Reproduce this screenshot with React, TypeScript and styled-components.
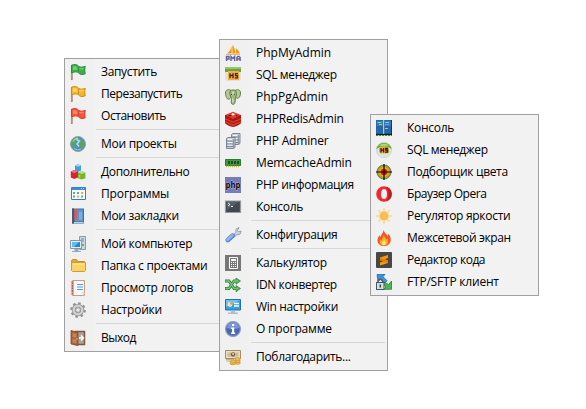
import React from "react";
import styled, { createGlobalStyle } from "styled-components";

const GlobalStyle = createGlobalStyle`
  html, body { margin: 0; background: #fff; }
  body { overflow: hidden; }
`;

const Desktop = styled.main`
  position: relative;
  width: 586px;
  height: 409px;
  background: #fff;
`;

const Menu = styled.ul<{ $x: number; $y: number }>`
  position: absolute;
  left: ${(p) => p.$x}px;
  top: ${(p) => p.$y}px;
  box-sizing: border-box;
  width: 169px;
  margin: 0;
  padding: 2px;
  list-style: none;
  border: 1px solid #a0a0a0;
  background: linear-gradient(to right, #f0f0f0 29px, #f2f2f2 29px);
  font-family: "Open Sans", "Noto Sans", sans-serif;
  font-size: 12px;
  color: #000;
`;

const Item = styled.li`
  display: flex;
  align-items: center;
  height: 22px;
  padding-left: 3px;
`;

const Separator = styled.li`
  height: 1px;
  margin: 2px 0 3px 29px;
  background: #d7d7d7;
`;

const Icon = styled.svg`
  flex: none;
  width: 16px;
  height: 16px;
  margin-right: 15px;
  overflow: visible;
`;

const Label = styled.span<{ $tracking: number }>`
  line-height: 22px;
  white-space: nowrap;
  letter-spacing: ${(p) => p.$tracking}px;
`;

const Flag = ({ fill, dark, light }: { fill: string; dark: string; light: string }) => (
  <>
    <path d="M1.800 1.500V15.800" stroke="#9a6a48" strokeWidth="1.700" />
    <path d="M1.800 9V15" stroke="#e8c8a8" strokeWidth=".6" />
    <path d="M1.500 1.200C4 .2 7.300.2 8.500 2.300c2 1.300 4 1 6.700 0l-.5 3.800.5 3.700c-3 1.200-5.300.9-6.600-1C7 7.500 5 7.600 1.500 8.800Z" fill={fill} stroke={dark} />
    <path d="M3 2.500c2-.6 3.600-.2 4.300 1.400V6.500C6.500 5.500 5 5.700 3 6.200Z" fill={light} opacity=".65" />
    <path d="M9.500 4.500c1.500.6 3 .4 4-.1" stroke={light} fill="none" />
    <path d="M8.500 3v6" stroke={dark} strokeWidth=".8" />
  </>
);

const icons: Record<string, React.ReactNode> = {
  green: <Flag fill="#3fae4c" dark="#278c38" light="#8be08d" />,
  yellow: <Flag fill="#f6b526" dark="#d18a12" light="#ffe58c" />,
  red: <Flag fill="#f5543a" dark="#d93a2a" light="#ffa38d" />,
  globe: (
    <>
      <circle cx="8" cy="8" r="7.500" fill="#4f8fb8" stroke="#8fa9a8" />
      <path d="M1.500 6C2.500 2.500 6 .8 9 1.300L8 3.500 6 5l1 2-3 1.500L5 11l-1.500 1.500C1.500 11 1 8.500 1.500 6Z" fill="#5aa562" />
      <path d="M11 2.500l3 2.500.8 4-2.300 4-2 .5-.5-3L8.500 9l1.500-3Z" fill="#5ba268" />
      <path d="M6.500 3.500l3 1.500-2.500 3 2 2.500" stroke="#a9e2f6" strokeWidth="1.600" fill="none" />
      <path d="M3 5.500Q4.500 2.500 8 2" stroke="#c3e6bd" fill="none" />
      <path d="M4 12.500q3.500 2.500 7 .5" stroke="#8ccdea" fill="none" />
    </>
  ),
  cubes: (
    <>
      <path d="M5 1.500L8 .2l3 1.200v5.200L8 8 5 6.700Z" fill="#3fa0dc" />
      <path d="M5 1.500L8 .2l3 1.200L8 2.700Z" fill="#9bd8f6" />
      <path d="M.8 7.500L4.200 6 8 7.500v6L4.200 15 .8 13.500Z" fill="#d52632" />
      <path d="M.8 7.500L4.200 6 8 7.500 4.200 9Z" fill="#f1747a" />
      <path d="M8 8.500l3.700-1.200 3.700 1.200v5.700L11.700 15.600 8 14.200Z" fill="#78b52f" />
      <path d="M8 8.500l3.700-1.200 3.700 1.200-3.700 1.400Z" fill="#bce27c" />
      <path d="M9.500 11v2.500" stroke="#a9d85f" strokeWidth="1.500" />
    </>
  ),
  programs: (
    <>
      <path d="M1.500 1.500h14v12h-14Z" fill="#f6fafd" stroke="#3480c4" />
      <path d="M2 2h13v2H2Z" fill="#3c8edb" />
      <path d="M11 2.500h1M13 2.500h1" stroke="#b7dcf8" />
      <path d="M3 6h2v2H3ZM11 9.500h2v2h-2Z" fill="#68b266" />
      <path d="M7 6h2v2H7ZM3 9.500h2v2H3Z" fill="#5b9cd1" />
      <path d="M11 6h2v2h-2ZM7 9.500h2v2H7Z" fill="#eda74c" />
    </>
  ),
  book: (
    <>
      <path d="M2 .5h12v15H2Z" fill="#3c72a8" />
      <path d="M2 .5h2v15H2Z" fill="#505965" />
      <path d="M5 1.500h8v12H5Z" fill="#5c97cc" />
      <path d="M9 4h3v8H9Z" fill="#79aedd" />
      <path d="M4.500 1h3v11.500L6 11l-1.500 1.500Z" fill="#e25858" />
      <path d="M4 14.500h9.500" stroke="#bacfe0" />
    </>
  ),
  computer: (
    <>
      <path d="M9.500.5h6v13h-6Z" fill="#c9d6df" stroke="#8b9eac" />
      <path d="M11 3h3M11 5h3" stroke="#73899a" />
      <path d="M12 9h2" stroke="#55c33f" strokeWidth="2" />
      <path d="M.5 4.500h11v8H.5Z" fill="#e5edf2" stroke="#8099aa" />
      <path d="M2 6h8v5H2Z" fill="#2687ce" />
      <path d="M2 6h7L4 11H2Z" fill="#63bcf0" />
      <path d="M4.500 13h4v2H11v1H2v-1h2.500Z" fill="#94a9b7" />
    </>
  ),
  folder: (
    <>
      <path d="M1.500 2.500L2.500 1.500h4l1.500 2h6.500v3h-13Z" fill="#dfa634" stroke="#c79124" />
      <path d="M1.500 4.500h14v8l-1 1h-12l-1-1Z" fill="#fbd369" stroke="#d59b29" />
      <path d="M3 6h11" stroke="#ffeaa8" />
    </>
  ),
  notebook: (
    <>
      <path d="M2.500.5h12v15h-12Z" fill="#f7f8f9" stroke="#c1a088" />
      <path d="M2.500 1v14" stroke="#b94c33" strokeWidth="2" />
      <path d="M.5 2h3M.5 4.500h3M.5 7h3M.5 9.500h3M.5 12h3M.5 14h3" stroke="#e4c9bd" strokeWidth=".8" />
      <path d="M7 4.500h6M7 7h6M7 9.500h6" stroke="#5795df" strokeWidth="1.200" />
      <path d="M12 11l3 2-2 2.500" fill="#d9d9d9" />
    </>
  ),
  gear: (
    <>
      <circle cx="8" cy="8" r="6.700" fill="none" stroke="#8e8e8e" strokeWidth="2.200" strokeDasharray="2.500 2.760" />
      <circle cx="8" cy="8" r="4.300" fill="none" stroke="#959595" strokeWidth="3.800" />
      <circle cx="8" cy="8" r="4.300" fill="none" stroke="#d2d2d2" strokeWidth="2.300" />
      <circle cx="8" cy="8" r="2.100" fill="#f2f2f2" stroke="#8d8d8d" strokeWidth=".7" />
    </>
  ),
  exit: (
    <>
      <path d="M5.500 1.500h9v13h-9Z" fill="#aaa39c" stroke="#80583c" strokeWidth="1.500" />
      <path d="M1 .5l7 2v13l-7-1.500Z" fill="#a86539" stroke="#7e4727" strokeWidth=".8" />
      <path d="M2.500 3l4 1v3.500l-4-.5ZM2.500 9l4 .500v4l-4-1Z" fill="#c7834e" />
      <path d="M9 8h4.500M11 5.500L13.500 8 11 10.500" stroke="#f7fafb" strokeWidth="1.500" fill="none" />
      <path d="M7 8v1.500" stroke="#f5ce70" />
    </>
  ),
  pma: (
    <>
      <path d="M2 8.500C4.800 6.500 5.800 4 6.600 1.500v7ZM7.400 0c1.900 2 2.700 4.500 2.900 8.500H7.400ZM11 3.200c1.800 1.500 2.700 3 3.800 5.300H11Z" fill="#f8960a" />
      <path d="M1 9.400h14" stroke="#c7a774" strokeWidth=".8" />
      <path d="M1.500 16v-4.500H4v2.500H1.500M6 16v-4.500l1.800 2 1.800-2V16M11.900 16v-3.500l1-1h1.200l1 1V16M12 14h3" fill="none" stroke="#60609a" strokeWidth="1.400" />
    </>
  ),
  heidi: (
    <>
      <path d="M0 0h16v5H0Z" fill="#68a442" /><path d="M0 0h16v2H0Z" fill="#92c76f" />
      <path d="M0 5h16v7l-1 2H1l-1-2Z" fill="#dae5e3" />
      <path d="M3 4h11v9H3Z" fill="#fba83f" />
      <path d="M5 6.200v5M8 6.200v5M5 8.500h3M13 6.700h-2.500v1.900h2v2.200H9.800" fill="none" stroke="#392a16" strokeWidth="1.300" />
    </>
  ),
  elephant: (
    <>
      <path d="M5.500 1C2.500 0 .3 1.300.5 4c0 3 1.500 6.500 3 6.300 1.400-.2 2-1.800 2-1.800ZM10.500 1c3-1 5.200.3 5 3 0 3-1.500 5.500-3 5.300-1.400-.2-2-1.300-2-1.300Z" fill="#b4ca95" stroke="#687f4f" />
      <path d="M5.200 2C6 .6 10 .6 10.800 2c1 2.200.7 4.500-.3 6.500L10 13.500c-.2 2.300-3.200 2.500-3.700.4V9C5 7 4.400 4.200 5.200 2Z" fill="#9fb97f" stroke="#687f4f" />
      <path d="M8 2.500v3M7.800 9.500v4" stroke="#d4e4bc" strokeWidth="1.300" />
      <path d="M6 5.500h1M9.200 5.500h1" stroke="#40502f" />
    </>
  ),
  redis: (
    <>
      <path d="M0 4v8c0 1 6 4 8 4s8-3 8-4V4Z" fill="#a31912" />
      <path d="M0 10l8 3.200 8-3.200v1.500L8 15 0 11.500ZM0 7l8 3.500L16 7v1.500L8 12 0 8.500Z" fill="#df3a2f" />
      <path d="M0 4L8 .8 16 4 8 8Z" fill="#e33b31" />
      <path d="M7 2l1 .6 1.500-.3-.4.900 1.200.7-1.700.1-.6.9-.8-1-1.600-.1 1.300-.6Z" fill="#fff" />
      <path d="M3 4.500l2-.7 2 .7-2 1ZM11 3.700l2 .8-2 1Z" fill="#77150f" />
    </>
  ),
  servers: (
    <>
      {[[6, 0], [1, 4]].map(([x, y]) => (
        <g key={x} transform={`translate(${x} ${y})`}>
          <path d="M.5 1.500L2 .5h7v10L7.500 11.500h-7Z" fill="#cbd0d9" stroke="#7f8796" />
          <path d="M.5 4h8M.5 7h8M.5 9.500h8" stroke="#7a8190" />
          <path d="M2 2.500h4M2 5.500h4M2 8.300h4" stroke="#f3f5f8" />
          <path d="M7.500 2v9" stroke="#929baa" />
        </g>
      ))}
    </>
  ),
  memory: (
    <>
      <path d="M.5 4.500h15v6H.5Z" fill="#3b9d42" stroke="#287d30" />
      <path d="M3 6h2v3H3ZM6 6h2v3H6ZM9 6h2v3H9ZM12 6h2v3h-2Z" fill="#254b2b" />
      <path d="M1 11.500h14" stroke="#d0b44e" strokeWidth="1.500" strokeDasharray="1 1" />
    </>
  ),
  php: (
    <>
      <path d="M0 0h16v16H0Z" fill="#777bb8" />
      <text x="8" y="11" textAnchor="middle" fontFamily="Open Sans" fontSize="9.500" fontWeight="700" textLength="15" lengthAdjust="spacingAndGlyphs" fill="#101019" stroke="#b9bbe0" strokeWidth=".8" paintOrder="stroke">php</text>
    </>
  ),
  terminal: (
    <>
      <path d="M.5 2h15v11.500H.5Z" fill="#42484e" stroke="#959b9f" strokeWidth="1.200" />
      <path d="M2 3h12l-12 8Z" fill="#555e65" />
      <path d="M3 4l2 1.500L3 7M6 7.500h2" fill="none" stroke="#fff" strokeWidth=".9" />
    </>
  ),
  wrench: (
    <>
      <path d="M8 8l3-2.500C10.300 3 11.500.8 14 .5l-1.500 3 1 1.200L16 4c.3 2.500-1.500 4.200-4 3.700L9.500 10Z" fill="#ced3d8" stroke="#858e98" strokeWidth=".8" />
      <path d="M7.500 8.700L2.800 13" stroke="#4b7fc9" strokeWidth="4.800" strokeLinecap="round" />
      <path d="M7.200 8.500L2.600 12.700" stroke="#8db6ed" strokeWidth="3" strokeLinecap="round" />
    </>
  ),
  calculator: (
    <>
      <path d="M0 0h16v16H0Z" fill="#777" />
      <path d="M4.500 2.500h8v11h-8Z" fill="none" stroke="#fff" />
      <path d="M6 4h5v2H6Z" fill="#fff" />
      <path d="M6 7.500h5M6 9.500h5M6 11.500h5" stroke="#fff" strokeDasharray="1 1" />
    </>
  ),
  shuffle: (
    <>
      <path d="M0 4h4l5 7.500h4M0 11.500h4L9 4h4" fill="none" stroke="#32813a" strokeWidth="3" />
      <path d="M11 1l4.500 3L11 7.200ZM11 8.500l4.500 3-4.500 3.300Z" fill="#4eb15a" stroke="#32813a" strokeWidth=".7" />
      <path d="M.5 4H4l5 7.500h4M.5 11.500H4L9 4h4" fill="none" stroke="#75c57a" strokeWidth="1.300" />
    </>
  ),
  winsettings: (
    <>
      <path d="M.5.5h15v10.500H.5Z" fill="#38a0e0" stroke="#226fb0" />
      <path d="M1 1h14L1 8Z" fill="#6dc4f3" />
      <circle cx="5" cy="5.500" r="2.400" fill="#f7e3b1" /><path d="M5 5.500V3.100A2.400 2.400 0 0 1 7.400 5.500Z" fill="#ee943a" />
      <path d="M9 4.500h5M9 7h5" stroke="#fff" strokeWidth="1.400" />
      <path d="M6 11.500h4v2h3v1.500H3v-1.500h3Z" fill="#aebfca" />
    </>
  ),
  info: (
    <>
      <circle cx="8" cy="8" r="7.400" fill="#4868b7" stroke="#8c9bc0" strokeWidth="1.200" />
      <path d="M2 7a6 6 0 0 1 12 0Q8 9 2 7Z" fill="#7895d4" />
      <path d="M7 3h2.200v2H7ZM6.200 6.500h3v5h1v1.500H6v-1.500h1V8h-.8Z" fill="#fff" />
    </>
  ),
  money: (
    <>
      <path d="M.5 1.500h15v8H.5Z" fill="#e8dcc2" stroke="#a58b66" />
      <path d="M2.500 3.500h11v4h-11Z" fill="#d0bc96" />
      <circle cx="8" cy="5.500" r="2.200" fill="#806646" /><circle cx="8" cy="5" r=".9" fill="#efe4cf" />
      <path d="M1 10.500h8M1 12h6" stroke="#c6ad86" />
      {[14, 12, 10].map((y) => <ellipse key={y} cx="12.500" cy={y} rx="2.800" ry="1.300" fill="#f4c64f" stroke="#c38722" strokeWidth=".7" />)}
      {[14.500, 12.800].map((y) => <ellipse key={y} cx="7.800" cy={y} rx="2.800" ry="1.200" fill="#f4c64f" stroke="#c38722" strokeWidth=".7" />)}
    </>
  ),
  conemu: (
    <>
      <path d="M0 0h7.500V14H0ZM8 0h7.500V14H8Z" fill="#2467ab" />
      <path d="M1 1h6v5H1ZM9 1h6v5H9Z" fill="#347fbe" />
      <path d="M7.700 0v14" stroke="#b4d2e8" />
      <path d="M15.500 0v14" stroke="#17395f" />
      <path d="M1.500 2.500h4" stroke="#5ef05a" /><path d="M3 4.500h3M9 8.500h3" stroke="#f7a54b" /><path d="M9 4.500h4" stroke="#ad70e6" /><path d="M9.500 2.500H13" stroke="#6be1a0" />
      <path d="M0 14.500h16" stroke="#101b20" strokeWidth="1.300" />
      <path d="M0 15.500h16" stroke="#2a9a2a" strokeDasharray="2 1" />
    </>
  ),
  heidiRound: (
    <>
      <circle cx="8" cy="8" r="7.700" fill="#dae5e0" stroke="#bac8be" strokeWidth=".5" />
      <path d="M.5 7a7.600 7.600 0 0 1 15 0L12 5H4Z" fill="#60ac38" />
      <path d="M3 3.500Q8-.5 13 3.500L8 4.500Z" fill="#a6d57e" />
      <path d="M4.500 4.500h7l1.500 2V10l-1.500 1.500h-7L3 10V6.500Z" fill="#f6a830" />
      <path d="M5 6v4.500M7.600 6v4.500M5 8.200h2.600M12 6.500H9.700v1.700h1.900v2H9" fill="none" stroke="#20201c" strokeWidth="1.300" />
    </>
  ),
  target: (
    <>
      <circle cx="8" cy="8" r="7" fill="#a3a233" stroke="#66752d" />
      <circle cx="8" cy="8" r="5" fill="#f2a91e" />
      <circle cx="8" cy="8" r="3.300" fill="#d51f11" />
      <path d="M8 0v16M0 8h16" stroke="#090909" strokeWidth="1.200" />
      <circle cx="8" cy="8" r=".8" fill="#7c0000" />
    </>
  ),
  opera: (
    <>
      <path fillRule="evenodd" d="M8 .2a7.800 7.800 0 1 0 0 15.600A7.800 7.800 0 0 0 8 .2ZM8 3c2 0 3 2 3 5s-1 5-3 5-3-2-3-5 1-5 3-5Z" fill="#ee2a32" />
      <path d="M10 1C13 1 15.800 4 15.800 8S13 15 10 15c2-1 2.500-4 2.500-7S12 2.500 10 1Z" fill="#c01a22" />
    </>
  ),
  sun: (
    <>
      <path d="M8 0v3M8 13v3M0 8h3M13 8h3M2.400 2.400l2 2M11.600 11.600l2 2M13.600 2.400l-2 2M4.400 11.600l-2 2" stroke="#f5d795" strokeWidth="1.500" />
      <circle cx="8" cy="8" r="4.700" fill="#f6bf4e" />
    </>
  ),
  fire: (
    <>
      <path d="M7.500 0c.8 3 3.500 4 4 6 .8-.6.7-1.700.5-2.500 2 2 3 4.300 2.700 7C14.300 14 11.500 16 8 16s-6.500-2-6.500-5.500C1.500 8 2.500 6.500 3.500 5c.1 1 .3 1.500 1 2 .3-2.500 3-4 3-7Z" fill="#ef5725" />
      <path d="M7.700 5c.5 2 2.300 3 3 4.500l.8-1c1.400 3.500.5 6.800-3.500 7-3.500 0-5-2.500-3.700-6l1.400 1.300C5.600 8.500 7.500 7.500 7.700 5Z" fill="#ffad27" />
      <path d="M8 9.500c.2 1.500 2 2.200 1.800 4-.3 2.200-3.500 2.200-3.800 0-.1-1.500 1.800-2.200 2-4Z" fill="#ffec72" />
    </>
  ),
  sublime: (
    <>
      <rect width="16" height="16" rx="1" fill="#474747" />
      <path d="M4 5.500L12 3v3L8.500 7.200 12 8.300v2.600L4 13.500v-3l3.500-1.200L4 8.200Z" fill="#ff9800" />
      <path d="M4 6l8 2.500v2.300L4 8.200Z" fill="#e17a08" />
    </>
  ),
  ftp: (
    <>
      <path d="M1 .5h8L7 2.700l4 4-2.500 2.500-4-4L2 7.500Z" fill="#3c91dc" stroke="#2469a9" strokeWidth=".8" />
      <path d="M15.500 7v8.300H7.800L10 13 7 10l2-2 3.500 2.800Z" fill="#48b94e" stroke="#287e31" strokeWidth=".8" />
      <path d="M2 9V7.500C2 4.500 6.500 4.500 6.500 7.500V9" fill="none" stroke="#55616d" strokeWidth="1.500" />
      <rect x=".5" y="8.500" width="7.500" height="7" fill="#d5dbe0" stroke="#475665" />
      <path d="M4.300 10.500v3" stroke="#34434d" strokeWidth="1.400" />
    </>
  ),
};

type Entry = [icon: string, label: string, tracking: number] | null;

const mainMenu: Entry[] = [
  ["green", "Запустить", -0.33],
  ["yellow", "Перезапустить", -0.46],
  ["red", "Остановить", -0.45],
  null,
  ["globe", "Мои проекты", -0.27],
  null,
  ["cubes", "Дополнительно", -0.38],
  ["programs", "Программы", -0.12],
  ["book", "Мои закладки", -0.33],
  null,
  ["computer", "Мой компьютер", -0.3],
  ["folder", "Папка с проектами", -0.29],
  ["notebook", "Просмотр логов", -0.16],
  ["gear", "Настройки", -0.22],
  null,
  ["exit", "Выход", -0.5],
];

const extrasMenu: Entry[] = [
  ["pma", "PhpMyAdmin", 0],
  ["heidi", "SQL менеджер", -0.36],
  ["elephant", "PhpPgAdmin", 0],
  ["redis", "PHPRedisAdmin", -0.17],
  ["servers", "PHP Adminer", -0.18],
  ["memory", "MemcacheAdmin", -0.12],
  ["php", "PHP информация", -0.29],
  ["terminal", "Консоль", -0.29],
  null,
  ["wrench", "Конфигурация", -0.33],
  null,
  ["calculator", "Калькулятор", -0.27],
  ["shuffle", "IDN конвертер", -0.4],
  ["winsettings", "Win настройки", -0.33],
  ["info", "О программе", -0.2],
  null,
  ["money", "Поблагодарить...", -0.32],
];

const programsMenu: Entry[] = [
  ["conemu", "Консоль", -0.29],
  ["heidiRound", "SQL менеджер", -0.36],
  ["target", "Подборщик цвета", -0.33],
  ["opera", "Браузер Opera", -0.46],
  ["sun", "Регулятор яркости", -0.3],
  ["fire", "Межсетевой экран", -0.38],
  ["sublime", "Редактор кода", -0.46],
  ["ftp", "FTP/SFTP клиент", -0.2],
];

const PopupMenu = ({ x, y, entries }: { x: number; y: number; entries: Entry[] }) => (
  <Menu $x={x} $y={y} role="menu">
    {entries.map((entry, i) =>
      entry ? (
        <Item key={i} role="menuitem">
          <Icon viewBox="0 0 16 16" aria-hidden="true">{icons[entry[0]]}</Icon>
          <Label $tracking={entry[2]}>{entry[1]}</Label>
        </Item>
      ) : (
        <Separator key={i} role="separator" />
      )
    )}
  </Menu>
);

export default function App() {
  return (
    <>
      <GlobalStyle />
      <Desktop>
        <PopupMenu x={64} y={58} entries={mainMenu} />
        <PopupMenu x={219} y={39} entries={extrasMenu} />
        <PopupMenu x={370} y={114} entries={programsMenu} />
      </Desktop>
    </>
  );
}
